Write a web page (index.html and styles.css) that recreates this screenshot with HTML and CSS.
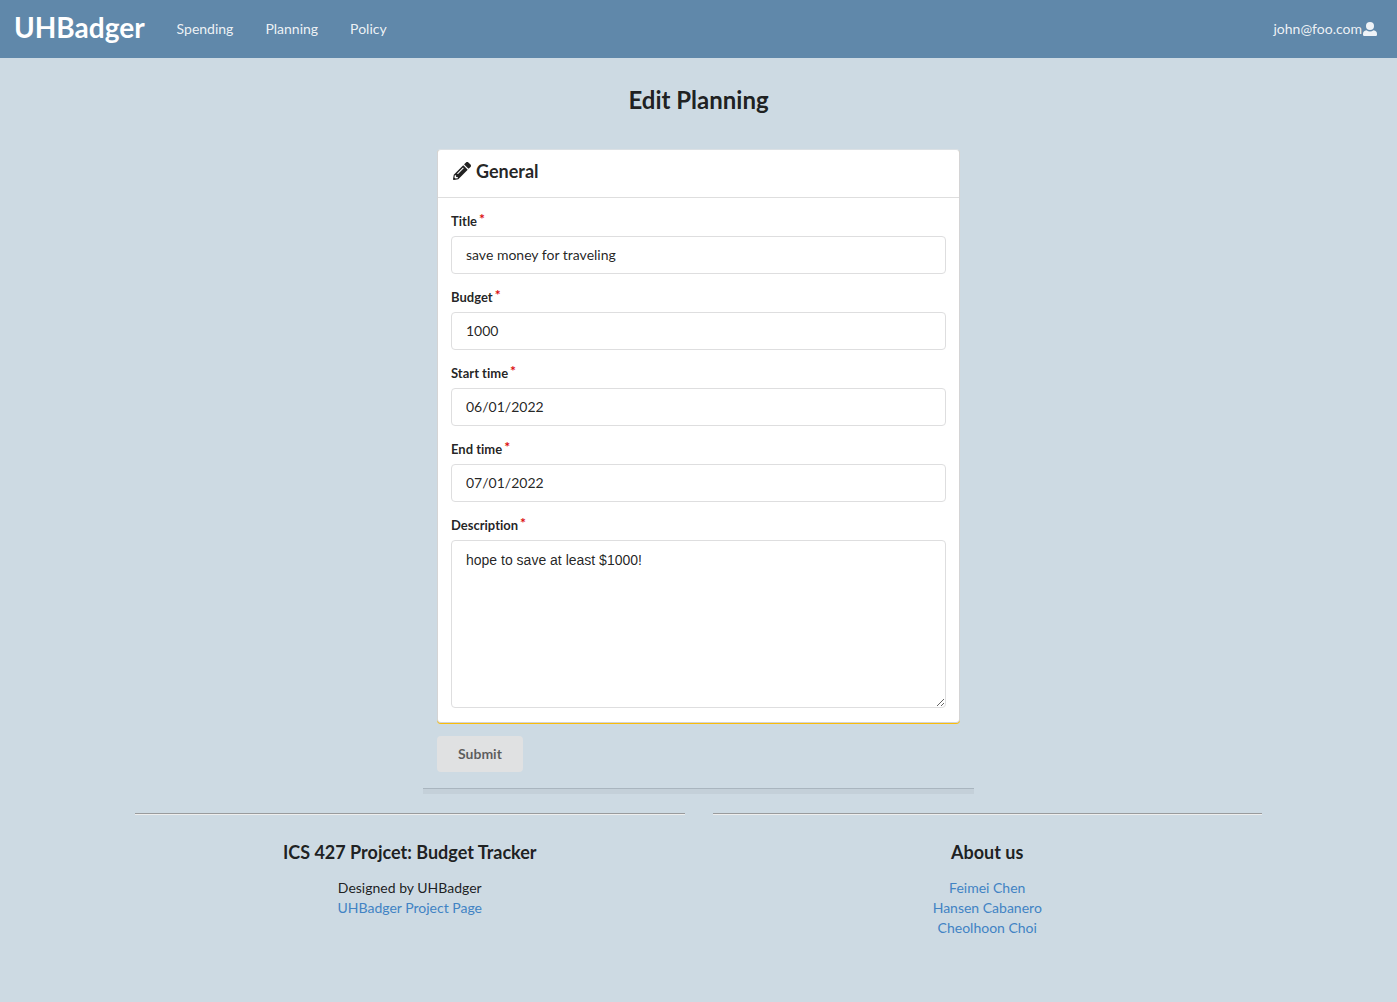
FILE: index.html
```html
<!DOCTYPE html>
<html lang="en">
<head>
<meta charset="utf-8">
<meta name="viewport" content="width=device-width, initial-scale=1">
<title>UHBadger</title>
<link rel="stylesheet" href="styles.css">
</head>
<body>
<nav class="navbar">
  <a class="brand" href="#">UHBadger</a>
  <a class="nav-item" href="#">Spending</a>
  <a class="nav-item" href="#">Planning</a>
  <a class="nav-item" href="#">Policy</a>
  <a class="nav-item account" href="#">john@foo.com<svg class="user-icon" viewBox="0 0 14 14" aria-hidden="true"><circle cx="7" cy="4" r="4"/><path d="M3.4 8.2Q7 10.6 10.6 8.2Q14 8.8 14 12V12.8Q14 14 12.8 14H1.2Q0 14 0 12.8V12Q0 8.8 3.4 8.2Z"/></svg></a>
</nav>
<main class="editor">
  <h2 class="page-title">Edit Planning</h2>
  <form>
    <section class="card">
      <h3 class="card-header"><svg class="pencil-icon" viewBox="0 0 512 512" aria-hidden="true"><path d="M497.9 142.1l-46.1 46.1c-4.7 4.7-12.3 4.7-17 0l-111-111c-4.7-4.7-4.7-12.3 0-17l46.1-46.1c18.7-18.7 49.1-18.7 67.9 0l60.1 60.1c18.8 18.7 18.8 49.1 0 67.9zM284.2 99.8L21.6 362.4.4 483.9c-2.9 16.4 11.4 30.6 27.8 27.8l121.5-21.3 262.6-262.6c4.7-4.7 4.7-12.3 0-17l-111-111c-4.8-4.7-12.4-4.7-17.1 0zM124.1 339.9c-5.5-5.5-5.5-14.3 0-19.8l154-154c5.5-5.5 14.3-5.5 19.8 0s5.5 14.3 0 19.8l-154 154c-5.5 5.5-14.3 5.5-19.8 0zM88 424h48v36.3l-64.5 11.3-31.1-31.1L51.7 376H88v48z"/></svg>General</h3>
      <div class="fields">
        <div class="field"><label for="title">Title<span class="required">*</span></label><input id="title" type="text" value="save money for traveling"></div>
        <div class="field"><label for="budget">Budget<span class="required">*</span></label><input id="budget" type="text" value="1000"></div>
        <div class="field"><label for="start">Start time<span class="required">*</span></label><input id="start" type="text" value="06/01/2022"></div>
        <div class="field"><label for="end">End time<span class="required">*</span></label><input id="end" type="text" value="07/01/2022"></div>
        <div class="field"><label for="description">Description<span class="required">*</span></label><textarea id="description">hope to save at least $1000!</textarea></div>
      </div>
    </section>
    <button class="submit" type="submit">Submit</button>
  </form>
  <div class="message-bar"></div>
</main>
<footer class="footer">
  <section class="footer-column">
    <hr>
    <h3>ICS 427 Projcet: Budget Tracker</h3>
    <p>Designed by UHBadger</p>
    <a href="#">UHBadger Project Page</a>
  </section>
  <section class="footer-column">
    <hr>
    <h3>About us</h3>
    <a href="#">Feimei Chen</a>
    <a href="#">Hansen Cabanero</a>
    <a href="#">Cheolhoon Choi</a>
  </section>
</footer>
</body>
</html>
```
FILE: styles.css
```css
* { box-sizing: border-box; }
html { background: #cddae3; }
body {
  margin: 0;
  font-family: Lato, "Liberation Sans", sans-serif;
  font-size: 14px;
  font-variant-ligatures: none;
  line-height: 20px;
  color: rgba(0, 0, 0, .87);
}
a { color: #4183c4; text-decoration: none; }
h2, h3, p { margin: 0; }

.navbar {
  display: flex;
  align-items: center;
  height: 58px;
  padding: 0 4px 0 14px;
  background: #6088aa;
}
.brand {
  margin-right: 16px;
  padding-bottom: 4px;
  color: #fff;
  font-size: 28px;
  font-weight: 700;
  line-height: 36px;
}
.nav-item { padding: 0 16px; color: rgba(255, 255, 255, .9); }
.account { display: flex; align-items: center; margin-left: auto; }
.user-icon { width: 14px; height: 14px; margin-left: 1px; fill: currentColor; }

.editor { width: 100%; max-width: 551px; margin: 0 auto; }
.page-title {
  padding: 27px 0 34px;
  font-size: 24px;
  line-height: 30px;
  text-align: center;
}
form { padding: 0 14px; }
.card {
  background: #fff;
  border: 1px solid #d4d4d5;
  border-top-color: #dbe0e4;
  border-radius: 4px;
  box-shadow: 0 1px 0 #fbbd08;
}
.card-header {
  display: flex;
  align-items: center;
  gap: 5px;
  height: 48px;
  padding: 0 15px 5px;
  border-bottom: 1px solid #dedede;
  font-size: 18px;
}
.pencil-icon { width: 18px; height: 18px; fill: currentColor; }
.fields { display: grid; gap: 13px; padding: 13px 13px 14px; }
.field { display: grid; gap: 5px; }
label { font-size: 13px; font-weight: 700; }
.required {
  margin-left: 2px;
  color: #db0d0d;
  font-size: 14px;
  line-height: 12px;
  vertical-align: 2px;
}
input, textarea {
  display: block;
  width: 100%;
  border: 1px solid #dededf;
  border-radius: 4px;
  background: #fff;
  color: rgba(0, 0, 0, .87);
  font: inherit;
}
input { height: 38px; padding: 0 14px 2px; }
textarea {
  height: 168px;
  padding: 10px 14px;
  font-family: "Liberation Sans", Arial, sans-serif;
  line-height: 18px;
  resize: vertical;
}
.submit {
  display: block;
  margin-top: 13px;
  padding: 8px 21px;
  border: 0;
  border-radius: 4px;
  background: #e0e1e2;
  color: rgba(0, 0, 0, .6);
  font: inherit;
  font-weight: 700;
}
.message-bar {
  height: 6px;
  margin-top: 16px;
  border-top: 1px solid #a9b5bf;
  background: #c4d0d9;
}

.footer {
  display: grid;
  grid-template-columns: 1fr 1fr;
  gap: 28px;
  width: 100%;
  max-width: 1127px;
  margin: 0 auto;
  padding: 19px 0 28px;
  text-align: center;
}
.footer-column { display: flex; flex-direction: column; align-items: center; }
.footer hr {
  width: 100%;
  height: 2px;
  margin: 0 0 26px;
  border: 0;
  border-top: 1px solid #999b9d;
  border-bottom: 1px solid #eee;
}
.footer h3 { margin-bottom: 15px; font-size: 18px; line-height: 22px; }
```
